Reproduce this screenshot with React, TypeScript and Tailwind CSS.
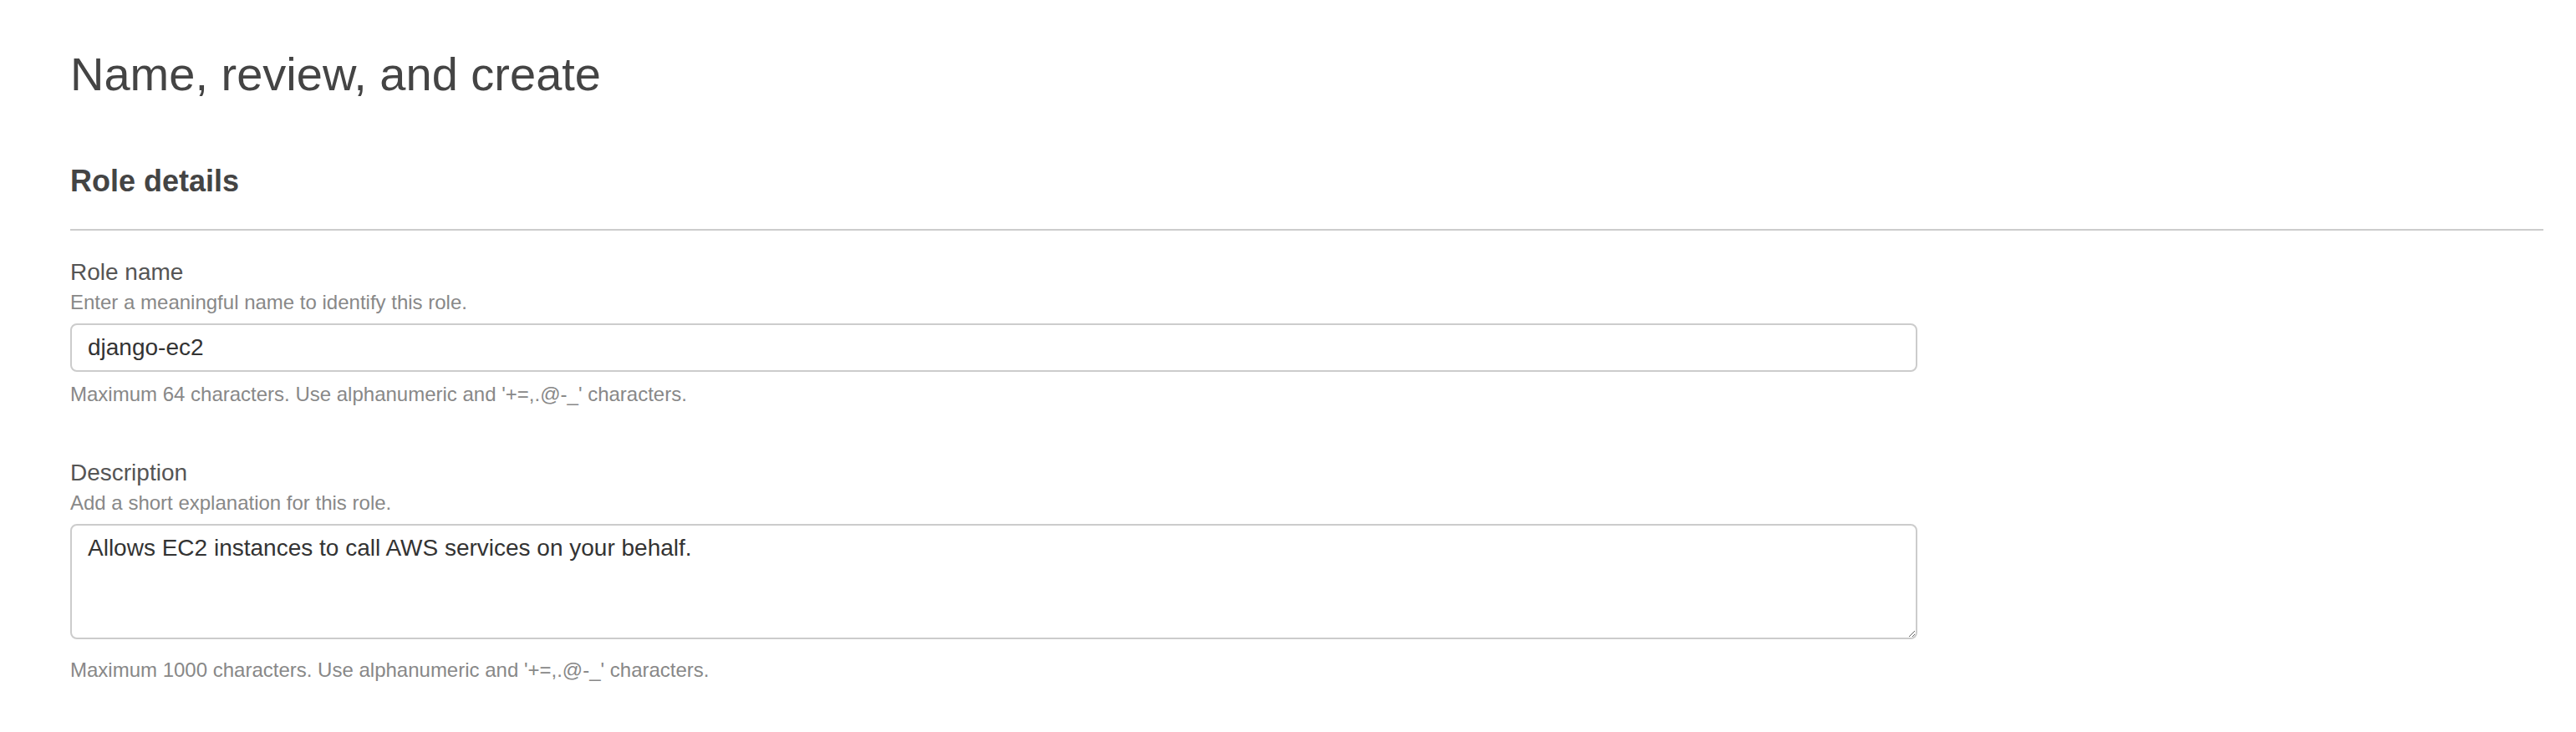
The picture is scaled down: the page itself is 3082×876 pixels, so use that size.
import React from 'react';

const font = { fontFamily: '"Liberation Sans", Arial, Helvetica, sans-serif' };

// Label + hint + control + footer for one form field
const Field = ({
  label,
  hint,
  footer,
  children,
  className,
  footerGap,
}: {
  label: string;
  hint: string;
  footer: string;
  children: React.ReactNode;
  className?: string;
  footerGap: string;
}) => (
  <div className={className}>
    <div className="text-[28px] leading-[32px] text-[#555]">{label}</div>
    <div className="mt-[6px] text-[24px] leading-[28px] text-[#888]">{hint}</div>
    <div className="mt-[11px]">{children}</div>
    <div className={`${footerGap} text-[24px] leading-[28px] text-[#888]`}>{footer}</div>
  </div>
);

export default function App() {
  return (
    <div className="min-h-[876px] bg-white pl-[84px] pr-[39px] pt-[58px]" style={font}>
      <h1 className="text-[56px] leading-[62px] font-normal text-[#444]">Name, review, and create</h1>

      <div className="mt-[77px] border-b-2 border-[#ccc] pb-[37px]">
        <h2 className="text-[36px] leading-[40px] font-bold text-[#444]">Role details</h2>
      </div>

      <div className="w-[2210px]">
        <Field
          className="mt-[34px]"
          label="Role name"
          hint="Enter a meaningful name to identify this role."
          footer="Maximum 64 characters. Use alphanumeric and '+=,.@-_' characters."
          footerGap="mt-[13px]"
        >
          <input
            type="text"
            defaultValue="django-ec2"
            className="block h-[58px] w-full rounded-[8px] border-2 border-[#ccc] bg-white pl-[19px] pr-[19px] text-[28px] leading-[32px] text-[#333] outline-none"
            style={font}
          />
        </Field>

        <Field
          className="mt-[64px]"
          label="Description"
          hint="Add a short explanation for this role."
          footer="Maximum 1000 characters. Use alphanumeric and '+=,.@-_' characters."
          footerGap="mt-[23px]"
        >
          <textarea
            defaultValue="Allows EC2 instances to call AWS services on your behalf."
            className="block h-[138px] w-full resize rounded-[8px] border-2 border-[#ccc] bg-white pl-[19px] pr-[19px] pt-[11px] text-[28px] leading-[32px] text-[#333] outline-none"
            style={font}
          />
        </Field>
      </div>
    </div>
  );
}
